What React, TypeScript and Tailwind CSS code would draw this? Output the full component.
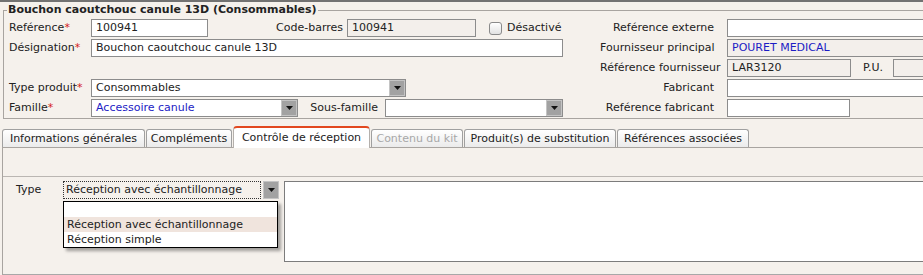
import React from "react";

function Arrow() {
  return (
    <div className="w-[16px] h-full bg-[#a2a2a2] border border-[#c4c4c4] flex items-center justify-center shrink-0">
      <svg width="7" height="4" viewBox="0 0 7 4">
        <polygon points="0,0 7,0 3.5,4" fill="#111" />
      </svg>
    </div>
  );
}

function Field({ className, value, disabled, blue }: { className: string; value?: string; disabled?: boolean; blue?: boolean }) {
  return (
    <div
      className={`h-[18px] border border-[#8c8c8c] px-[4px] leading-[16px] whitespace-nowrap overflow-hidden shrink-0 ${
        disabled ? "bg-[#f3efeb]" : "bg-white"
      } ${blue ? "text-[#1c1cc4]" : "text-[#222]"} ${className}`}
    >
      {value}
    </div>
  );
}

function Select({ className, value, blue }: { className: string; value?: string; blue?: boolean }) {
  return (
    <div className={`h-[18px] border border-[#8c8c8c] bg-white flex shrink-0 ${className}`}>
      <div className={`flex-1 px-[4px] leading-[16px] whitespace-nowrap overflow-hidden ${blue ? "text-[#1c1cc4]" : "text-[#222]"}`}>
        {value}
      </div>
      <Arrow />
    </div>
  );
}

function Label({ text, required }: { text: string; required?: boolean }) {
  return (
    <div className="w-[82px] shrink-0 leading-[18px] whitespace-nowrap">
      {text}
      {required && <span className="text-[#d42020]">*</span>}
    </div>
  );
}

function RightLabel({ text }: { text: string }) {
  return <div className="w-[127px] pr-[13px] text-right leading-[18px] whitespace-nowrap shrink-0">{text}</div>;
}

const tabs = [
  { label: "Informations générales", w: "w-[143px]" },
  { label: "Compléments", w: "w-[86px]" },
  { label: "Contrôle de réception", w: "w-[137px]", active: true },
  { label: "Contenu du kit", w: "w-[92px]", disabled: true },
  { label: "Produit(s) de substitution", w: "w-[152px]" },
  { label: "Références associées", w: "w-[132px]" },
];

export default function App() {
  return (
    <div className="w-[923px] h-[275px] overflow-hidden bg-[#f5f1ec] text-[11px] text-[#222] border-t-2 border-[#727272] font-['DejaVu_Sans',Verdana,sans-serif]">
      {/* Product header */}
      <fieldset className="ml-[3px] mt-[1px] w-[960px] border border-[#a8a4a0] px-[5px] pb-[1px]">
        <legend className="ml-[-2px] px-[1px] font-bold leading-[14px] text-[#222]">
          Bouchon caoutchouc canule 13D (Consommables)
        </legend>
        <div className="flex mt-[2px]">
          <div className="w-[591px] shrink-0 flex flex-col gap-[2px]">
            <div className="flex h-[18px]">
              <Label text="Reférence" required />
              <Field className="w-[117px]" value="100941" />
              <div className="w-[139px] pr-[4px] text-right leading-[18px] shrink-0">Code-barres</div>
              <Field className="w-[129px]" value="100941" disabled />
              <div className="ml-[13px] mt-[3px] w-[13px] h-[13px] rounded-[3px] border border-[#8a8a8a] bg-gradient-to-b from-white to-[#e2e2e2] shrink-0" />
              <div className="ml-[5px] leading-[18px]">Désactivé</div>
            </div>
            <div className="flex h-[18px]">
              <Label text="Désignation" required />
              <Field className="w-[472px]" value="Bouchon caoutchouc canule 13D" />
            </div>
            <div className="h-[18px]" />
            <div className="flex h-[18px]">
              <Label text="Type produit" required />
              <Select className="w-[315px]" value="Consommables" />
            </div>
            <div className="flex h-[18px]">
              <Label text="Famille" required />
              <Select className="w-[207px]" value="Accessoire canule" blue />
              <div className="w-[87px] pr-[7px] text-right leading-[18px] shrink-0">Sous-famille</div>
              <Select className="w-[178px]" />
            </div>
          </div>
          <div className="flex flex-col gap-[2px]">
            <div className="flex h-[18px]">
              <RightLabel text="Reférence externe" />
              <Field className="w-[220px]" />
            </div>
            <div className="flex h-[18px]">
              <RightLabel text="Fournisseur principal" />
              <Field className="w-[220px]" value="POURET MEDICAL" disabled blue />
            </div>
            <div className="flex h-[18px]">
              <RightLabel text="Référence fournisseur" />
              <Field className="w-[124px]" value="LAR3120" disabled />
              <div className="w-[42px] pl-[12px] leading-[18px] shrink-0">P.U.</div>
              <Field className="w-[60px]" disabled />
            </div>
            <div className="flex h-[18px]">
              <RightLabel text="Fabricant" />
              <Field className="w-[220px]" />
            </div>
            <div className="flex h-[18px]">
              <RightLabel text="Reférence fabricant" />
              <Field className="w-[123px]" />
            </div>
          </div>
        </div>
      </fieldset>

      {/* Tabs */}
      <div className="ml-[2px] mt-[7px] flex items-end gap-[1px] h-[21px]">
        {tabs.map((t) =>
          t.active ? (
            <div
              key={t.label}
              className={`${t.w} h-[22px] mb-[-1px] relative z-10 bg-white border-t-2 border-x border-t-[#e2481f] border-x-[#b4b0ac] rounded-t-[4px] text-center leading-[19px] whitespace-nowrap`}
            >
              {t.label}
            </div>
          ) : (
            <div
              key={t.label}
              className={`${t.w} h-[18px] bg-gradient-to-b from-white to-[#ebebeb] border-t border-x border-[#a0a0a0] rounded-t-[3px] text-center leading-[17px] whitespace-nowrap ${
                t.disabled ? "text-[#a8a8a8]" : "text-[#222]"
              }`}
            >
              {t.label}
            </div>
          )
        )}
      </div>

      {/* Tab panel */}
      <div className="ml-[2px] border-t border-l border-[#a8a4a0] h-[200px]">
        <div className="mt-[28px] border-t border-[#bab6b2] border-b border-b-dotted border-b-[#a8a8a8] pt-[4px] pb-[12px] flex">
          <div className="w-[60px] pl-[13px] leading-[18px] shrink-0">Type</div>
          <div className="relative w-[215px] shrink-0">
            <div className="h-[18px] flex">
              <div className="flex-1 border border-dotted border-[#333] px-[2px] leading-[16px] whitespace-nowrap">
                Réception avec échantillonnage
              </div>
              <div className="ml-[2px] w-[15px]">
                <Arrow />
              </div>
            </div>
            {/* open list */}
            <div className="absolute left-0 top-[20px] w-[215px] bg-white border border-black shadow-[3px_3px_3px_rgba(0,0,0,0.35)] z-20">
              <div className="h-[15px]" />
              <div className="h-[15px] px-[3px] leading-[15px] bg-[#f0e4dd]">Réception avec échantillonnage</div>
              <div className="h-[15px] px-[3px] leading-[15px]">Réception simple</div>
            </div>
          </div>
          <div className="ml-[6px] w-[700px] h-[81px] bg-white border border-[#7c7c7c] shrink-0" />
        </div>
      </div>
    </div>
  );
}
